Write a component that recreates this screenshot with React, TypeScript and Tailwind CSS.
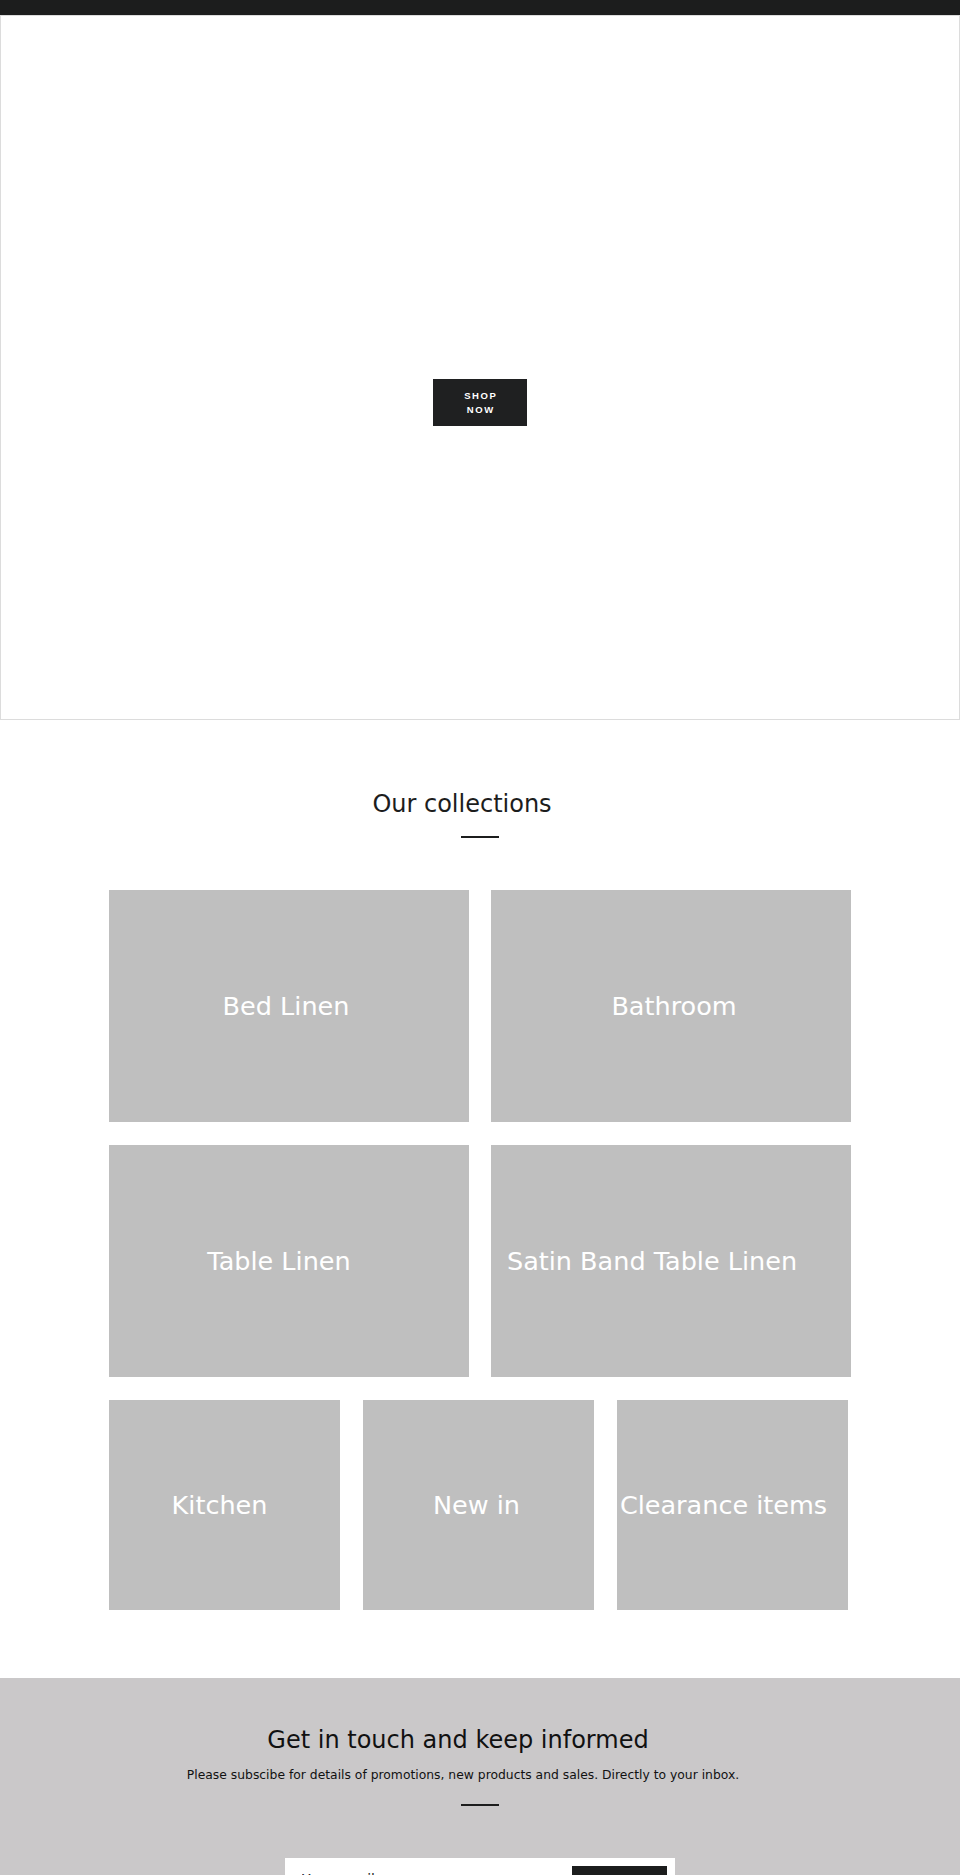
import React from "react";

const tilesTop = [
  { label: "Bed Linen", cls: "-translate-x-[3px]" },
  { label: "Bathroom", cls: "translate-x-[3px]" },
  { label: "Table Linen", cls: "-translate-x-[10px]" },
  { label: "Satin Band Table Linen", cls: "-translate-x-[19px]" },
];

const tilesBottom = [
  { label: "Kitchen", cls: "-translate-x-[5px]" },
  { label: "New in", cls: "-translate-x-[2px]" },
  { label: "Clearance items", cls: "-translate-x-[9px]" },
];

export default function App() {
  return (
    <div className="w-[960px] bg-white font-['DejaVu_Sans',sans-serif] text-[#1c1d1d]">
      {/* top bar */}
      <div className="h-[15px] bg-[#1c1d1d]" />

      {/* hero */}
      <div className="h-[705px] border border-[#dcdcdc] bg-white flex flex-col items-center justify-center pt-[70px]">
        <button className="w-[94px] h-[47px] bg-[#1f2021] text-white font-['Liberation_Sans',Arial,sans-serif] font-bold text-[9.5px] leading-[14px] tracking-[1.6px] flex flex-col items-center justify-center pl-[1.6px]">
          <span>SHOP</span>
          <span>NOW</span>
        </button>
      </div>

      {/* collections */}
      <section className="pt-[70px] pb-[68px]">
        <h2 className="text-center text-[24px] leading-[28.8px] font-normal -translate-x-[18px]">Our collections</h2>
        <div className="mx-auto mt-[17px] w-[38px] h-[2px] bg-[#1c1d1d]" />

        <div className="ml-[109px] mt-[52px] w-[742px] flex flex-col gap-[23px]">
          <div className="grid grid-cols-[360px_360px] gap-x-[22px] gap-y-[23px]">
            {tilesTop.map((t) => (
              <div key={t.label} className="h-[232px] bg-[#bfbfbf] flex items-center justify-center">
                <span className={`text-white text-[25.5px] leading-[30px] whitespace-nowrap ${t.cls}`}>{t.label}</span>
              </div>
            ))}
          </div>
          <div className="grid grid-cols-[231px_231px_231px] gap-[23px]">
            {tilesBottom.map((t) => (
              <div key={t.label} className="h-[210px] bg-[#bfbfbf] flex items-center justify-center">
                <span className={`text-white text-[25.5px] leading-[30px] whitespace-nowrap ${t.cls}`}>{t.label}</span>
              </div>
            ))}
          </div>
        </div>
      </section>

      {/* newsletter */}
      <section className="bg-[#cac8c9] pt-[48px] pb-[40px] flex flex-col items-center">
        <h2 className="text-[24px] leading-[28.8px] font-normal text-[#111] -translate-x-[22px]">Get in touch and keep informed</h2>
        <p className="mt-[10px] text-[12.35px] leading-[20px] text-[#111] -translate-x-[17px]">
          Please subscibe for details of promotions, new products and sales. Directly to your inbox.
        </p>
        <div className="mt-[19px] w-[38px] h-[2px] bg-[#1c1d1d]" />
        <form className="mt-[52px] w-[390px] bg-white p-2 flex gap-2">
          <input
            type="email"
            placeholder="Your email"
            className="flex-1 min-w-0 pl-[9px] py-[3px] self-start text-[14px] leading-[20px] text-[#1c1d1d] placeholder:text-[#1c1d1d] outline-none bg-transparent"
          />
          <button type="button" className="w-[95px] h-[40px] bg-[#1c1d1d] text-white text-[11px] font-bold tracking-[1.5px] font-['Liberation_Sans',Arial,sans-serif]">
            SUBSCRIBE
          </button>
        </form>
      </section>
    </div>
  );
}
